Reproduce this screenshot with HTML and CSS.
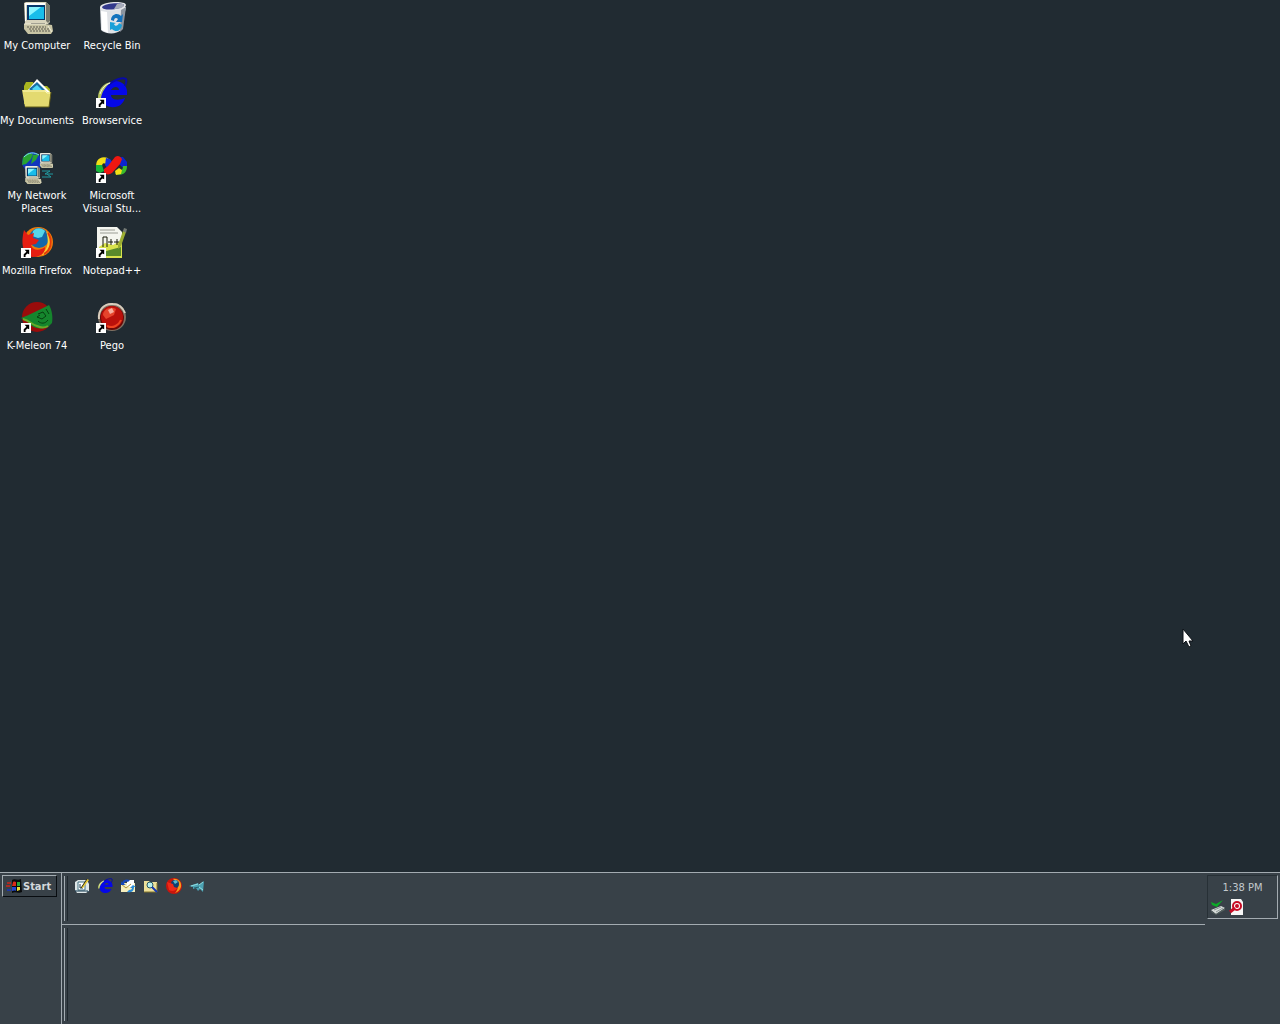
FILE: index.html
```html
<!DOCTYPE html>
<html lang="en">
<head>
  <meta charset="UTF-8" />
  <meta name="viewport" content="width=device-width, initial-scale=1.0"/>
  <title>Desktop</title>
  <link rel="stylesheet" href="styles.css">
</head>
<body>
  <!-- shared icon parts -->
  <svg class="defs" aria-hidden="true">
    <symbol id="shortcut" viewBox="0 0 11 11">
      <path d="M0 0h11v11H0z" fill="#fff"/>
      <path d="M4 2h5v5L7 6 5 8v2H3V7l3-3z" fill="#000"/>
    </symbol>
    <symbol id="pc" viewBox="0 0 32 32">
      <path d="M3 1l2-1h20l4 4v16l-2 2H4z" fill="#d8d4bc"/>
      <path d="M25 0l4 4v15l-2 2-2-2z" fill="#77786c"/>
      <path d="M4 1h20v2H5v16H4z" fill="#fff"/>
      <path d="M6 3h18v15H6z" fill="#06386c"/>
      <path d="M8 5h15v12H8z" fill="#19bdea"/>
      <path d="M8 5h12L8 14z" fill="#8af4ff"/>
      <path d="M10 21h14v3H10z" fill="#55564d"/>
      <path d="M3 22h21l7 1 1 6-2 3H7l-4-5z" fill="#c8c4a4"/>
      <path d="M6 25h19M8 27h20M9 29h20" stroke="#5c5b50" stroke-dasharray="2 1"/>
      <path d="M3 22h22M27 24l4 6" stroke="#f0edd8" fill="none"/>
    </symbol>
    <symbol id="ie" viewBox="0 0 32 32">
      <path d="M31 18H15c0 5 7 6 14 3-2 7-8 10-14 9C8 29 4 23 5 17 6 9 12 4 20 4c8 1 12 6 11 14zM23 13c0-4-6-4-8 0z" fill="#0508e8" fill-rule="evenodd"/>
      <path d="M12 8C19 2 27 0 30 2c1 2 0 4-1 7" fill="none" stroke="#080aa8" stroke-width="2"/>
      <path d="M2 21C2 13 7 6 15 5 9 10 6 15 5 21z" fill="#b4c25c"/>
      <path d="M4 17C6 11 9 8 14 6" stroke="#f3f5e4" fill="none"/>
    </symbol>
    <symbol id="firefox" viewBox="0 0 32 32">
      <circle cx="17" cy="15" r="15" fill="#f07a08"/>
      <circle cx="18" cy="11" r="10" fill="#1567a8"/>
      <path d="M12 4c4-4 9-3 12 0l-3 6-4 1-6-2z" fill="#56d6e8"/>
      <path d="M25 4c8 7 7 18-1 23l-7 2c9-4 12-13 8-25z" fill="#ffcf31"/>
      <path d="M27 6c5 8 3 17-4 21" fill="none" stroke="#e33b09" stroke-width="2"/>
      <path d="M3 3l4 5 6-2-1 5 6 2-3 4-5 1c2 6 9 6 14 2 0 7-5 10-12 10C3 29-1 19 3 3z" fill="#e51d12"/>
    </symbol>
  </svg>

  <main class="desktop">
    <a class="icon" href="#computer">
      <svg viewBox="0 0 32 32"><use href="#pc"/></svg>
      <span>My Computer</span>
    </a>
    <a class="icon" href="#recycle">
      <svg viewBox="0 0 32 32">
        <path d="M4 5l1 23c4 4 15 5 20 0l5-23z" fill="#dfe2e6"/>
        <path d="M25 8l-1 22 3-3 3-22z" fill="#8d95a0"/>
        <path d="M5 9l1 19 6 3-1-21z" fill="#fff"/>
        <path d="M4 5c1-5 25-7 26-2 0 6-25 9-26 2z" fill="#e6e7ea"/>
        <path d="M6 5c2-4 21-5 22-2 0 4-21 7-22 2z" fill="#33398c"/>
        <path d="M21 2c4-1 7 0 7 1 0 3-6 4-10 4z" fill="#a7acba"/>
        <path d="M15 18c0-6 7-8 10-4l2-2-1 8h-6l2-3c-2-2-4-1-4 2z" fill="#1473bd"/>
        <path d="M14 20l6 1-2 1c1 3 4 2 5-1l3 2c-1 6-6 8-10 4l-2 1z" fill="#19a0d8"/>
      </svg>
      <span>Recycle Bin</span>
    </a>
    <a class="icon" href="#documents">
      <svg viewBox="0 0 32 32">
        <path d="M3 9l2-4h7l2 4h12l3 3v15H3z" fill="#a9b51f"/>
        <path d="M16 2l14 14-6 5L7 13z" fill="#fff"/>
        <path d="M16 5l8 8-8 6-8-7z" fill="#176ea5"/>
        <path d="M16 8l5 5-5 4-5-5z" fill="#4ed7f8"/>
        <path d="M1 13h23l2 2h4l-2 15H4z" fill="#e3da70"/>
        <path d="M2 14h22l2 2h3" stroke="#fff9b5" fill="none"/>
        <path d="M4 30h24l2-15" stroke="#615c16" fill="none"/>
      </svg>
      <span>My Documents</span>
    </a>
    <a class="icon" href="#browservice">
      <svg viewBox="0 0 32 32"><use href="#ie"/><use href="#shortcut" x="0" y="21" width="10" height="10"/></svg>
      <span>Browservice</span>
    </a>
    <a class="icon" href="#network">
      <svg viewBox="0 0 32 32">
        <circle cx="11" cy="10" r="10" fill="#1236bd"/>
        <path d="M2 5l5-4 5 1-2 5-5 5-4 1zM12 3l6-1-3 6-5 4z" fill="#28a332"/>
        <path d="M3 5c5-5 10-5 15-2" stroke="#7fdeeb" fill="none"/>
        <use href="#pc" x="17" y="1" width="16" height="15"/>
        <use href="#pc" x="2" y="14" width="19" height="18"/>
        <path d="M21 19h8l-5 3h8M21 25h9l-4-3" stroke="#21999f" fill="none"/>
      </svg>
      <span>My Network Places</span>
    </a>
    <a class="icon" href="#vstudio">
      <svg viewBox="0 0 32 32">
        <path d="M3 14c0-5 4-7 8-5" stroke="#f3df16" stroke-width="6" fill="none"/>
        <path d="M0 13h6l2 6-4 2-4-2z" fill="#18b63a"/>
        <path d="M10 6l4 1 3 4-5 6-3-4z" fill="#1530d8"/>
        <path d="M23 5h4l4 5v5h-5l-4-4z" fill="#0b24ce"/>
        <path d="M29 14c0 6-4 8-9 6" stroke="#3dbb2a" stroke-width="4" fill="none"/>
        <path d="M19 19l4-3 3 2-1 4-5 1z" fill="#f3df16"/>
        <path d="M8 17l4-3 7-9c3-2 5-1 7 2l-2 5-8 9c-3 2-6 2-8-1z" fill="#ef1710"/>
        <use href="#shortcut" x="0" y="21" width="10" height="10"/>
      </svg>
      <span>Microsoft Visual Stu...</span>
    </a>
    <a class="icon" href="#firefox-app">
      <svg viewBox="0 0 32 32"><use href="#firefox"/><use href="#shortcut" x="0" y="21" width="10" height="10"/></svg>
      <span>Mozilla Firefox</span>
    </a>
    <a class="icon" href="#notepad">
      <svg viewBox="0 0 32 32">
        <path d="M1 0h20l5 5v26H1z" fill="#f4f5ef"/>
        <path d="M4 3h15M4 6h18" stroke="#9a9c94"/>
        <path d="M3 20l6-4 8 2 9-5v18H3z" fill="#d9e34d"/>
        <path d="M10 24l15-4v9H10z" fill="#598a2b"/>
        <path d="M7 20v-10h4v10" stroke="#17190b" fill="none"/>
        <path d="M15 12v6M12 15h5M21 12v6M18 15h5" stroke="#17190b" fill="none"/>
        <path d="M22 18l5-14 3 1-5 14-3 3z" fill="#9cad32"/>
        <path d="M27 4l1-3 3 1-1 4z" fill="#757a75"/>
        <use href="#shortcut" x="0" y="21" width="10" height="10"/>
      </svg>
      <span>Notepad++</span>
    </a>
    <a class="icon" href="#kmeleon">
      <svg viewBox="0 0 32 32">
        <circle cx="16" cy="15" r="15" fill="#990c0b"/>
        <path d="M0 16C8 13 18 8 28 3c3 5 4 12 3 18l-4 4c-8 3-16 1-20-5z" fill="#15862d"/>
        <path d="M2 17c7 2 8 5 14 7 4 2 8 2 11 0" stroke="#66ab29" stroke-width="2" fill="none"/>
        <path d="M17 12l5-2 3 4-4 3-5-2 3-2M17 19c3 3 7 3 10-1M25 7l3 5" stroke="#06400f" fill="none"/>
        <use href="#shortcut" x="0" y="21" width="10" height="10"/>
      </svg>
      <span>K-Meleon 74</span>
    </a>
    <a class="icon" href="#pego">
      <svg viewBox="0 0 32 32">
        <circle cx="16" cy="15" r="14" fill="#817264"/>
        <path d="M3 17C2 7 9 1 17 2c6 0 10 4 12 9" stroke="#d8cdbd" stroke-width="2" fill="none"/>
        <circle cx="16" cy="16" r="12" fill="#6e0906"/>
        <circle cx="16" cy="15" r="11" fill="#ba100b"/>
        <path d="M7 13c0-6 8-9 13-6l-2 6-8 4z" fill="#e6442c"/>
        <path d="M12 8l4-2 2 4-4 2z" fill="#f7afa0"/>
        <path d="M11 24c6 3 12-1 14-6" stroke="#ee4321" stroke-width="2" fill="none"/>
        <use href="#shortcut" x="0" y="21" width="10" height="10"/>
      </svg>
      <span>Pego</span>
    </a>
  </main>

  <footer class="taskbar">
    <div class="start-area">
      <button class="start" type="button">
        <svg viewBox="0 0 16 16">
          <path d="M6 2c3-2 5 1 9-1l1 13c-4 2-6-1-10 1z" fill="#080a0c"/>
          <path d="M7 4c2-1 2 0 3 0v4H6z" fill="#d92a18"/>
          <path d="M11 4h3v4h-3z" fill="#27a33a"/>
          <path d="M6 9h4v4c-2-1-3 0-4 0z" fill="#2447cc"/>
          <path d="M11 9h3v3l-3 1z" fill="#e7dc3a"/>
          <path d="M1 5h4M0 8h4" stroke="#a92b24" stroke-width="2"/>
          <path d="M1 12h4" stroke="#1d37a8" stroke-width="2"/>
        </svg>
        Start
      </button>
    </div>
    <div class="bands">
      <div class="top-row">
        <nav class="band quick-launch" aria-label="Quick Launch">
          <a href="#show-desktop" title="Show Desktop">
            <svg viewBox="0 0 16 16">
              <path d="M1 4l3-2h9l2 4v7l-3 2H3l-2-3z" fill="#dfe7e8"/>
              <path d="M4 4h7v8H4z" fill="#fff" stroke="#427083"/>
              <path d="M6 6v4h3M1 13h13v1" stroke="#163b50" fill="none"/>
              <path d="M7 10l6-9 2 1-6 8z" fill="#e6c933"/>
              <path d="M7 10l6-9" stroke="#282817"/>
            </svg>
          </a>
          <a href="#ie-browser" title="Internet Explorer"><svg viewBox="0 0 32 32"><use href="#ie"/></svg></a>
          <a href="#mail" title="Outlook Express">
            <svg viewBox="0 0 16 16">
              <path d="M1 5h14v9H1z" fill="#f7efbd"/>
              <path d="M7 2h7v7H7z" fill="#fff"/>
              <path d="M1 6l5 4 5-4" stroke="#b09338" fill="none"/>
              <path d="M2 5c1-4 5-4 8-3L8 4c-3-1-3 0-4 2l2 1H1V3z" fill="#1648bd"/>
              <path d="M14 9c0 5-4 6-7 5l2-2c2 0 3-1 3-2h-2l3-3 3 2z" fill="#2b8cd7"/>
            </svg>
          </a>
          <a href="#search" title="Search">
            <svg viewBox="0 0 16 16">
              <path d="M1 3h5l1 1h7v10H1z" fill="#eee09a"/>
              <path d="M1 14h13V5" stroke="#82742b" fill="none"/>
              <circle cx="7" cy="7" r="3" fill="#b8eff1" stroke="#265762"/>
              <path d="M9 9l5 5" stroke="#1538b2" stroke-width="2"/>
            </svg>
          </a>
          <a href="#firefox-quick" title="Mozilla Firefox">
            <svg viewBox="0 0 16 16">
              <circle cx="8" cy="8" r="8" fill="#c9150d"/>
              <path d="M7 1c5-1 9 3 8 8-1 3-3 5-6 6 4-4 4-9-2-14z" fill="#f59a1c"/>
              <circle cx="9" cy="6" r="4" fill="#123f70"/>
              <path d="M7 3l3-1 2 2-3 2z" fill="#58b9d0"/>
              <path d="M1 4l3 1 3 1 1 3 3 1c-1 3-5 4-8 2z" fill="#f02a18"/>
            </svg>
          </a>
          <a href="#plane" title="Messenger">
            <svg viewBox="0 0 16 16">
              <path d="M0 8l9-3 1 2 5-4-1 11-3-3-2 2-2-3-3 1v-2z" fill="#4ca2b3"/>
              <path d="M2 8l7-2M10 7l4-3M10 9l4 3" stroke="#92dce1"/>
              <path d="M5 10l5-1" stroke="#24616f"/>
            </svg>
          </a>
        </nav>
        <div class="tray">
          <time class="clock" datetime="13:38">1:38 PM</time>
          <div class="tray-icons">
            <svg viewBox="0 0 16 16">
              <path d="M1 11l10-4 4 2-9 6z" fill="#d7dcda"/>
              <path d="M1 12l5 3 9-6v2l-9 5-5-3z" fill="#53605e"/>
              <path d="M4 11l7-3M6 13l7-4" stroke="#8b9795"/>
              <path d="M1 3l5 2 7-4-6 7-5-2z" fill="#0ca927"/>
            </svg>
            <svg viewBox="0 0 16 16">
              <path d="M2 0h10l2 3v13H2z" fill="#f7f7f7"/>
              <circle cx="8" cy="7" r="4" fill="#fff" stroke="#c70c25" stroke-width="2"/>
              <path d="M6 9l-5 4" stroke="#c70c25" stroke-width="3"/>
              <circle cx="8" cy="7" r="2" fill="#c70c25"/>
            </svg>
          </div>
        </div>
      </div>
      <div class="band task-list"></div>
    </div>
  </footer>

  <svg class="cursor" viewBox="0 0 12 20" aria-hidden="true">
    <path d="M1 1v15l3-3 3 6 2-1-2-5h4z" fill="#fff" stroke="#0c1116"/>
  </svg>
</body>
</html>
```

FILE: styles.css
```css
* {
  box-sizing: border-box;
}
body {
  margin: 0;
  min-height: 100vh;
  display: flex;
  flex-direction: column;
  background: #212b32;
  color: #fff;
  font-family: "DejaVu Sans Condensed", "Open Sans", sans-serif;
  font-size: 11px;
  line-height: 13px;
}
svg {
  display: block;
}
.defs {
  position: absolute;
  width: 0;
  height: 0;
}

/* desktop icons */
.desktop {
  flex: 1;
  display: grid;
  grid-template-columns: 74px 74px;
  grid-auto-rows: 75px;
  column-gap: 1px;
  align-content: start;
  padding-top: 2px;
}
.icon {
  display: flex;
  flex-direction: column;
  align-items: center;
  gap: 5px;
  color: #fff;
  text-align: center;
  text-decoration: none;
}
.icon svg {
  width: 32px;
  height: 32px;
}
.icon span {
  width: 76px;
}

/* taskbar */
.taskbar {
  display: flex;
  min-height: 152px;
  background: #384148;
  border-top: 1px solid #a3abb1;
}
.start-area {
  width: 62px;
  padding: 2px;
  border-right: 1px solid #a3abb1;
}
.start {
  display: flex;
  align-items: center;
  gap: 1px;
  width: 55px;
  height: 22px;
  padding: 0 3px;
  background: #384148;
  border: 1px solid #a3abb1;
  border-right-color: #080c10;
  border-bottom-color: #080c10;
  color: #d3d8dc;
  font: inherit;
  font-weight: bold;
}
.start svg {
  flex: none;
  width: 16px;
  height: 16px;
}
.bands {
  flex: 1;
  display: flex;
  flex-direction: column;
}
.top-row {
  display: flex;
  height: 52px;
}
.band {
  position: relative;
  flex: 1;
  padding: 5px 12px;
}
/* gripper */
.band::before {
  content: "";
  position: absolute;
  left: 2px;
  top: 3px;
  bottom: 3px;
  width: 2px;
  border-left: 1px solid #a3abb1;
  border-right: 1px solid #20282e;
}
.quick-launch {
  display: flex;
  gap: 7px;
  border-bottom: 1px solid #a3abb1;
}
.quick-launch a,
.quick-launch svg {
  width: 16px;
  height: 16px;
}
.tray {
  width: 71px;
  height: 44px;
  margin: 2px 2px 0;
  padding: 5px 2px 0;
  border: 1px solid #273036;
  border-right-color: #a3abb1;
  border-bottom-color: #a3abb1;
}
.clock {
  display: block;
  color: #c3c9cd;
  text-align: center;
}
.tray-icons {
  display: flex;
  gap: 3px;
  padding-top: 5px;
}
.tray-icons svg {
  width: 16px;
  height: 16px;
}

.cursor {
  position: absolute;
  left: 1182px;
  top: 628px;
  width: 12px;
  height: 20px;
}
```
